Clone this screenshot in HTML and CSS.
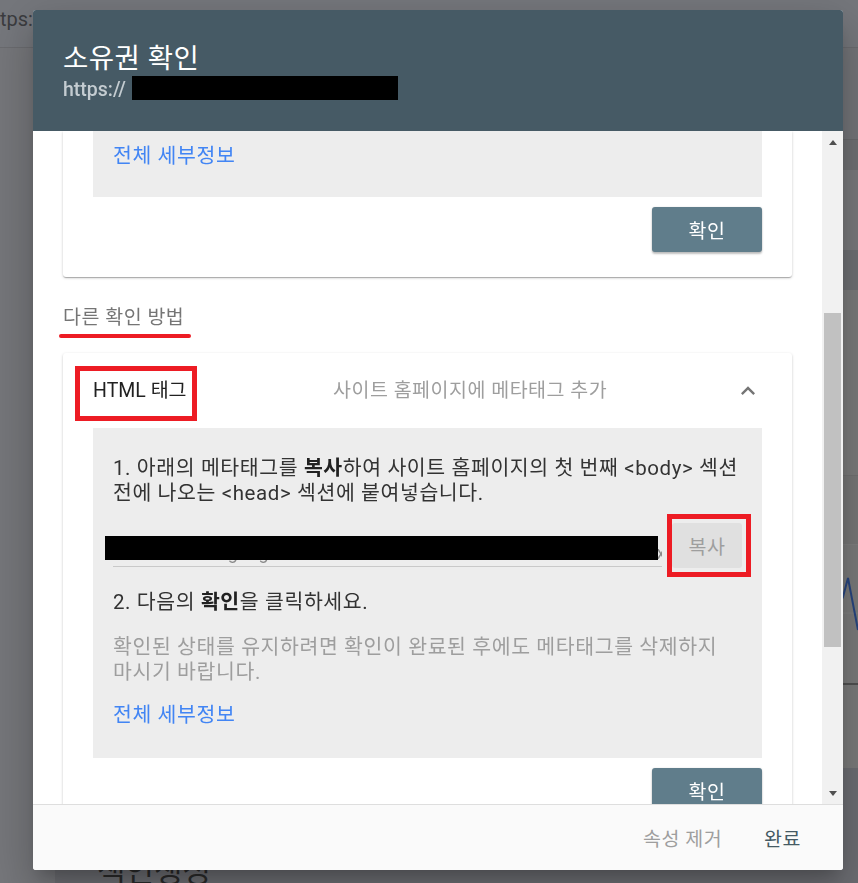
FILE: index.html
```html
<!DOCTYPE html>
<html lang="ko">
<head>
<meta charset="utf-8">
<title>소유권 확인</title>
<link rel="stylesheet" href="styles.css">
</head>
<body>
<div class="page">
  <div class="topbar"><span class="url">tps://</span></div>
  <div class="layout">
    <nav class="nav"></nav>
    <main class="main">
      <div class="band b1"></div>
      <div class="band b2"></div>
      <div class="band b3"></div>
      <div class="band b4"></div>
      <div class="band b5"></div>
      <div class="band b6"></div>
      <div class="chart">
        <svg class="chart-svg" viewBox="0 0 803 138" preserveAspectRatio="none">
          <line x1="0" y1="68" x2="803" y2="68" stroke="#818181" stroke-width="1"/>
          <polyline points="760,110 788,52 793,33 803,85" fill="none" stroke="#27457f" stroke-width="2"/>
        </svg>
      </div>
      <div class="band b7"></div>
      <div class="index-card"><h2 class="index-title">색인생성</h2></div>
    </main>
  </div>
</div>

<div class="dialog" role="dialog" aria-label="소유권 확인">
  <header class="dlg-head">
    <h1 class="dlg-title">소유권 확인</h1>
    <div class="dlg-sub">https://<span class="redact-inline"></span></div>
  </header>

  <div class="dlg-body">
    <div class="dlg-scroll">
      <section class="card card-cut">
        <div class="panel panel-top">
          <a class="more" href="#">전체 세부정보</a>
        </div>
        <div class="actions"><button class="btn-primary">확인</button></div>
      </section>

      <h2 class="other"><span class="mark-under">다른 확인 방법</span></h2>

      <section class="card">
        <div class="exp-head">
          <span class="exp-title"><span class="mark-box">HTML 태그</span></span>
          <span class="exp-desc">사이트 홈페이지에 메타태그 추가</span>
          <svg class="chev" viewBox="0 0 24 24"><path d="M12 8l-6 6 1.41 1.41L12 10.83l4.59 4.58L18 14z"/></svg>
        </div>
        <div class="panel">
          <p class="step">1. 아래의 메타태그를 <b>복사</b>하여 사이트 홈페이지의 첫 번째 &lt;body&gt; 섹션 전에 나오는 &lt;head&gt; 섹션에 붙여넣습니다.</p>
          <div class="copy-row">
            <div class="field">
              <div class="field-text">&lt;meta name="google-site-verification" content="xxxxxxxxxxxxxxxxxxxxxxxxxxxxxxxxxxxxxxxxxxx" /&gt;</div>
              <span class="redact"></span>
            </div>
            <div class="copy-wrap"><button class="btn-copy">복사</button></div>
          </div>
          <p class="step step2">2. 다음의 <b>확인</b>을 클릭하세요.</p>
          <p class="note">확인된 상태를 유지하려면 확인이 완료된 후에도 메타태그를 삭제하지 마시기 바랍니다.</p>
          <a class="more" href="#">전체 세부정보</a>
        </div>
        <div class="actions"><button class="btn-primary">확인</button></div>
      </section>
    </div>

    <div class="scrollbar">
      <div class="sb-btn sb-up"><span class="tri-up"></span></div>
      <div class="sb-track"><div class="sb-thumb"></div></div>
      <div class="sb-btn sb-down"><span class="tri-down"></span></div>
    </div>
  </div>

  <footer class="dlg-foot">
    <button class="btn-text muted">속성 제거</button>
    <button class="btn-text">완료</button>
  </footer>
</div>
</body>
</html>
```

FILE: styles.css
```css
*, *::before, *::after { box-sizing: border-box; }

html, body {
  margin: 0;
  height: 100%;
}

body {
  font-family: Roboto, "Noto Sans CJK KR", sans-serif;
  background: #737478;
  color: #333;
  overflow: hidden;
}

button {
  font: inherit;
  border: 0;
  margin: 0;
  cursor: pointer;
}

/* ---------- dimmed page behind the dialog ---------- */
.page {
  min-height: 883px;
  display: flex;
  flex-direction: column;
}

.topbar {
  height: 48px;
  background: #75777c;
  border-bottom: 1px solid #6a6b6f;
  padding-top: 7px;
}

.url {
  display: block;
  font-size: 20px;
  line-height: 24px;
  color: #3b3c3f;
}

.layout {
  flex: 1;
  display: flex;
}

.nav {
  width: 55px;
  flex: none;
  background: #75767a;
}

.main {
  flex: 1;
  display: flex;
  flex-direction: column;
}

.b1 { height: 92px; background: #737478; border-bottom: 1px solid #68696c; }
.b2 { height: 30px; background: #6f7073; }
.b3 { height: 80px; background: #78797b; }
.b4 { height: 40px; background: #6e6f73; }
.b5 { height: 186px; background: #7a7a7a; border-bottom: 1px solid #707070; }
.b6 { height: 69px; background: #767676; border-bottom: 1px solid #7e7e7e; }
.b7 { height: 83px; background: #7a7a7a; }

.chart {
  height: 140px;
  background: #7a7a7a;
  border-bottom: 2px solid #505050;
}

.chart-svg {
  display: block;
  width: 100%;
  height: 138px;
}

.index-card {
  flex: 1;
  background: #6c6d72;
  padding: 86px 0 0 42px;
}

.index-title {
  margin: 0;
  font-size: 31px;
  line-height: 36px;
  font-weight: 400;
  color: #2a2a2a;
}

/* ---------- dialog ---------- */
.dialog {
  position: fixed;
  left: 33px;
  top: 10px;
  width: 810px;
  height: 860px;
  background: #fff;
  border-radius: 3px;
  overflow: hidden;
  display: flex;
  flex-direction: column;
  box-shadow: 0 11px 15px -7px rgba(0,0,0,.2), 0 24px 38px 3px rgba(0,0,0,.12), 0 9px 46px 8px rgba(0,0,0,.1);
}

.dlg-head {
  flex: none;
  background: #465a65;
  padding: 33px 30px 29px;
}

.dlg-title {
  margin: 0;
  font-size: 27.5px;
  line-height: 32px;
  letter-spacing: 0.5px;
  font-weight: 400;
  color: #fff;
}

.dlg-sub {
  position: relative;
  margin-top: 3px;
  font-size: 19.5px;
  line-height: 24px;
  font-weight: 500;
  color: #c4ccd1;
}

.redact-inline {
  position: absolute;
  left: 69px;
  top: -2px;
  width: 266px;
  height: 24px;
  background: #000;
}

.dlg-body {
  flex: 1;
  min-height: 0;
  display: flex;
}

.dlg-scroll {
  flex: 1;
  min-width: 0;
  overflow: hidden;
  padding: 0 30px;
}

/* scrollbar */
.scrollbar {
  width: 21px;
  flex: none;
  background: #f1f1f1;
  display: flex;
  flex-direction: column;
}

.sb-btn {
  height: 21px;
  flex: none;
  display: flex;
  align-items: center;
  justify-content: center;
}

.sb-up { padding-top: 1px; }
.sb-down { padding-bottom: 1px; }

.tri-up {
  width: 0;
  height: 0;
  border-left: 4.5px solid transparent;
  border-right: 4.5px solid transparent;
  border-bottom: 5px solid #505050;
}

.tri-down {
  width: 0;
  height: 0;
  border-left: 4.5px solid transparent;
  border-right: 4.5px solid transparent;
  border-top: 5px solid #505050;
}

.sb-track {
  flex: 1;
  padding: 161px 2px 0;
}

.sb-thumb {
  height: 334px;
  background: #c1c1c1;
}

/* cards */
.card {
  background: #fff;
  border-radius: 3px;
  padding: 0 30px 25px;
  box-shadow: 0 1px 3px rgba(0,0,0,.2), 0 1px 1px rgba(0,0,0,.14), 0 2px 1px -1px rgba(0,0,0,.12);
}

.card-cut {
  border-top-left-radius: 0;
  border-top-right-radius: 0;
}

.panel {
  background: #ededed;
  padding: 28px 20px 30px;
}

.panel-top {
  padding: 13px 20px 28px;
}

.more {
  display: block;
  font-size: 20.5px;
  line-height: 25px;
  letter-spacing: 0.6px;
  color: #4285f4;
  text-decoration: none;
}

.panel .step + .copy-row { margin-top: 17px; }
.panel .note + .more { margin-top: 18px; }

.actions {
  display: flex;
  justify-content: flex-end;
  margin-top: 10px;
}

.btn-primary {
  width: 110px;
  height: 45px;
  background: #607d8b;
  color: #fff;
  border-radius: 3px;
  font-size: 19.5px;
  letter-spacing: 0.5px;
  box-shadow: 0 2px 2px rgba(0,0,0,.24), 0 0 2px rgba(0,0,0,.12);
}

.other {
  margin: 28px 0 23px;
  font-size: 19.5px;
  line-height: 25px;
  letter-spacing: 0.5px;
  font-weight: 400;
  color: #757575;
}

.mark-under {
  position: relative;
  display: inline-block;
}

.mark-under::after {
  content: "";
  position: absolute;
  left: -4px;
  right: -7px;
  bottom: -8px;
  height: 4px;
  border-radius: 2px;
  background: #ed1c24;
}

.exp-head {
  height: 75px;
  display: grid;
  grid-template-columns: 240px 1fr 28px;
  align-items: center;
  font-size: 19.5px;
  line-height: 25px;
  letter-spacing: 0.5px;
}

.exp-title {
  color: #212121;
  letter-spacing: 0;
}

.mark-box {
  position: relative;
  display: inline-block;
}

.mark-box::after {
  content: "";
  position: absolute;
  left: -18px;
  top: -12px;
  width: 122px;
  height: 55px;
  border: 5px solid #ed1c24;
}

.exp-desc { color: #9e9e9e; }

.chev {
  display: block;
  width: 28px;
  height: 28px;
  fill: #757575;
}

.step {
  margin: 0;
  font-size: 20.5px;
  line-height: 25px;
  letter-spacing: 0.6px;
  color: #333;
}

.step b {
  font-weight: 700;
  color: #212121;
}

.step2 { margin-top: 22px; }

.copy-row {
  display: flex;
  align-items: center;
  gap: 10px;
}

.field {
  flex: 1;
  min-width: 0;
  position: relative;
  height: 42px;
  border-bottom: 1px solid #c9c9c9;
  display: flex;
  align-items: flex-end;
}

.field-text {
  width: 100%;
  overflow: hidden;
  white-space: nowrap;
  font-size: 18px;
  line-height: 24px;
  padding-bottom: 1px;
  color: #8a8a8a;
}

.redact {
  position: absolute;
  left: -8px;
  top: 11px;
  width: 553px;
  height: 24px;
  background: #000;
}

.copy-wrap {
  position: relative;
  flex: none;
}

.copy-wrap::after {
  content: "";
  position: absolute;
  left: -5px;
  top: -9px;
  right: -9px;
  bottom: -9px;
  border: 5px solid #ed1c24;
}

.btn-copy {
  display: block;
  width: 70px;
  height: 45px;
  border-radius: 3px;
  background: #e0e0e0;
  color: #9e9e9e;
  font-size: 19.5px;
  letter-spacing: 0.5px;
}

.note {
  margin: 20px 0 0;
  font-size: 20.5px;
  line-height: 25px;
  letter-spacing: 0.6px;
  color: #9e9e9e;
}

/* footer */
.dlg-foot {
  flex: none;
  height: 66px;
  background: #fafafa;
  border-top: 1px solid #dedede;
  display: flex;
  justify-content: flex-end;
  align-items: center;
  padding-right: 21px;
}

.btn-text {
  height: 45px;
  padding: 0 21px;
  background: none;
  font-size: 19.5px;
  letter-spacing: 0.5px;
  color: #455a64;
}

.btn-text.muted { color: #9e9e9e; }
```
